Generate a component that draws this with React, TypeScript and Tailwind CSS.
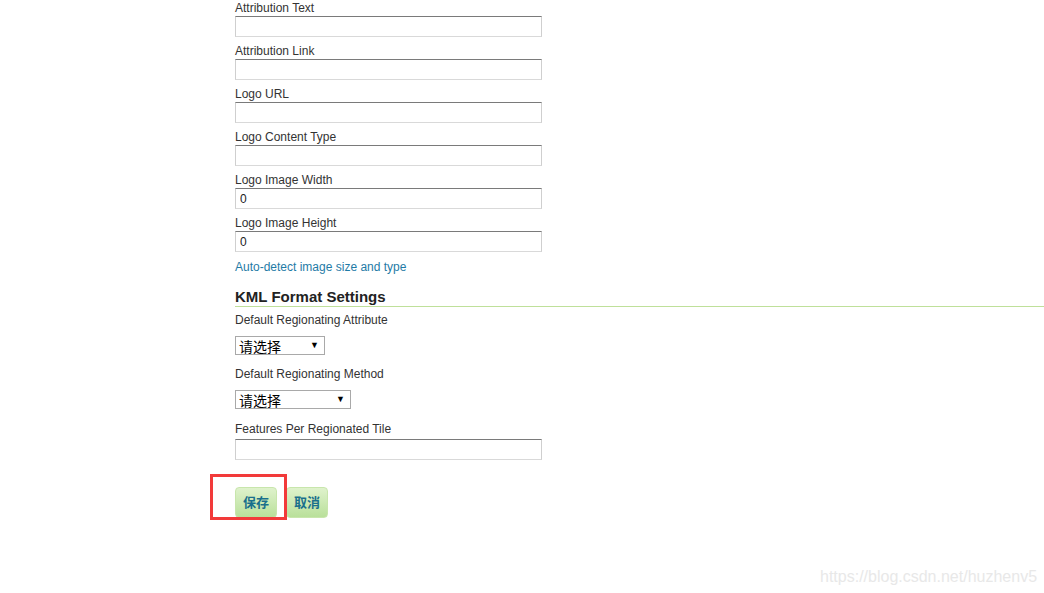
import React from "react";

const font = { fontFamily: '"Liberation Sans", "Noto Sans CJK SC", sans-serif' };

const Field: React.FC<{ label: string; value?: string; mt?: string }> = ({ label, value, mt = "mt-[6px]" }) => (
  <div className={mt}>
    <label className="block h-4 text-[12px] leading-4 text-[#333]">{label}</label>
    <input
      defaultValue={value}
      className="block h-[21px] w-[307px] border border-t-[#7a7a7a] border-x-[#cfcfcf] border-b-[#d9d9d9] bg-white px-[4px] text-[12px] text-[#222] outline-none"
    />
  </div>
);

const Select: React.FC<{ width: string }> = ({ width }) => (
  <div
    className={`mt-[8px] flex h-[19px] ${width} items-center justify-between border border-[#a9a9a9] bg-white pl-[3px] pr-[5px]`}
  >
    <span className="text-[14px] leading-none text-black" style={{ fontFamily: '"Noto Sans CJK SC", sans-serif' }}>
      请选择
    </span>
    <span className="text-[9px] leading-none text-black">▼</span>
  </div>
);

export default function App() {
  return (
    <div className="relative h-[593px] w-[1044px] overflow-hidden bg-white" style={font}>
      <div className="ml-[235px]">
        <Field label="Attribution Text" mt="mt-0" />
        <Field label="Attribution Link" />
        <Field label="Logo URL" />
        <Field label="Logo Content Type" />
        <Field label="Logo Image Width" value="0" />
        <Field label="Logo Image Height" value="0" />
        <a className="mt-[7px] block h-4 text-[12px] leading-4 text-[#1f7ba6]">Auto-detect image size and type</a>

        <h3 className="mt-[12px] h-[20px] border-b border-b-[#bfe09a] text-[15px] font-bold leading-5 text-[#222]">
          KML Format Settings
        </h3>

        <div className="mt-[5px] h-4 text-[12px] leading-4 text-[#333]">Default Regionating Attribute</div>
        <Select width="w-[90px]" />

        <div className="mt-[11px] h-4 text-[12px] leading-4 text-[#333]">Default Regionating Method</div>
        <Select width="w-[116px]" />

        <div className="mt-[12px] h-4 text-[12px] leading-4 text-[#333]">Features Per Regionated Tile</div>
        <input className="mt-[2px] block h-[21px] w-[307px] border border-t-[#7a7a7a] border-x-[#cfcfcf] border-b-[#d9d9d9] bg-white outline-none" />

        <div className="mt-[27px] flex gap-[9px]">
          <button className="h-[31px] w-[42px] rounded-[4px] border border-[#c8e6ac] bg-gradient-to-b from-[#dff2cc] to-[#b9e09a] text-[13px] font-bold text-[#1a6f8c]">
            保存
          </button>
          <button className="h-[31px] w-[42px] rounded-[4px] border border-[#c8e6ac] bg-gradient-to-b from-[#dff2cc] to-[#b9e09a] text-[13px] font-bold text-[#1a6f8c]">
            取消
          </button>
        </div>
      </div>

      <div className="absolute left-[210px] top-[474px] h-[46px] w-[77px] border-[3px] border-[#f23a3a]" />

      <div className="absolute left-[820px] top-[565px] text-[16px] text-[#e8e8e8]">https://blog.csdn.net/huzhenv5</div>
    </div>
  );
}
